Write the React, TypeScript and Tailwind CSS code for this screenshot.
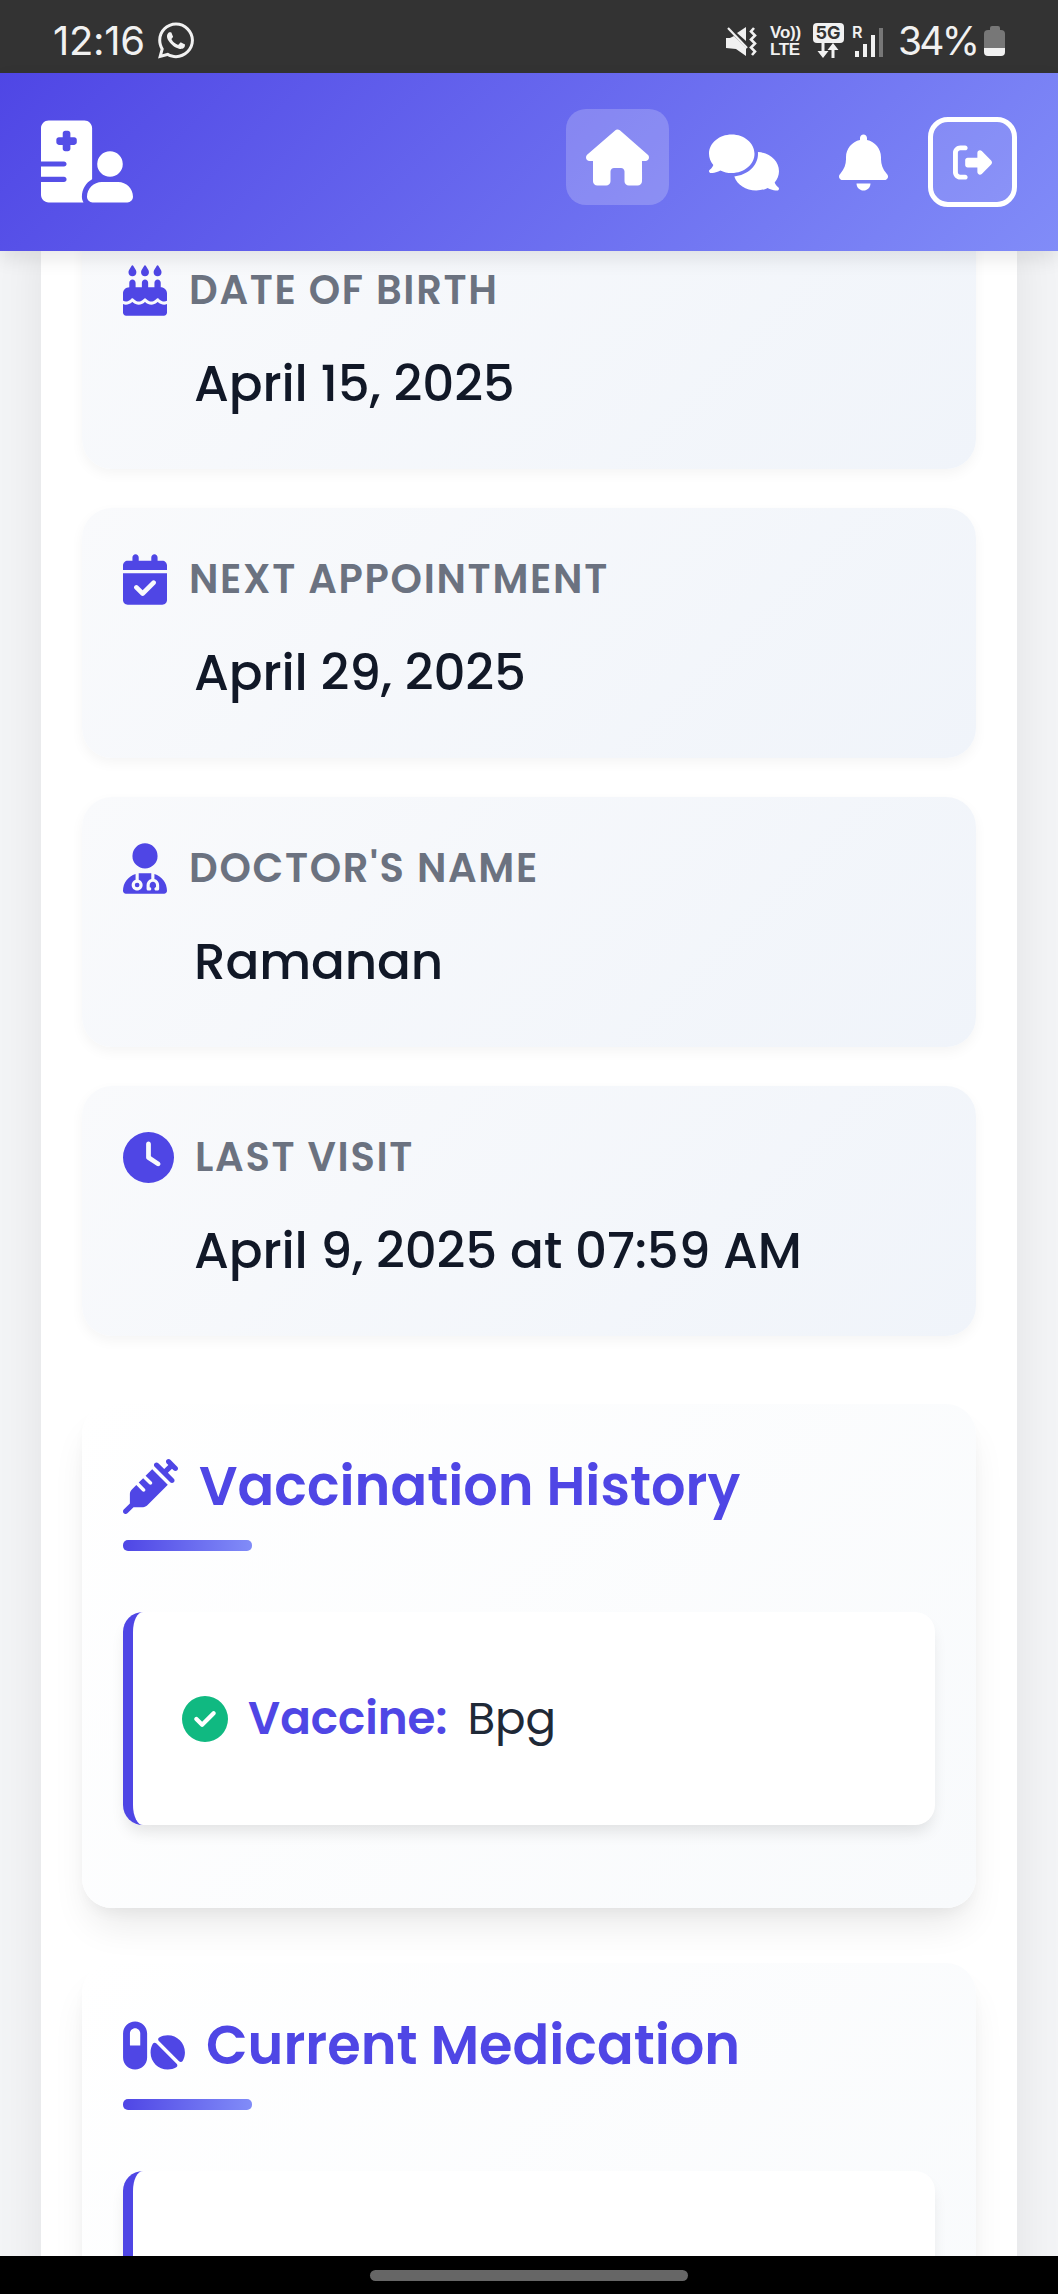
import React from "react";
import type { IconType } from "react-icons";
import {
  FaBell,
  FaCakeCandles,
  FaCalendarCheck,
  FaCircleCheck,
  FaClock,
  FaComments,
  FaHospitalUser,
  FaHouse,
  FaPills,
  FaRightFromBracket,
  FaSyringe,
  FaUserDoctor,
  FaWhatsapp,
} from "react-icons/fa6";

function MutedVibrateIcon() {
  return (
    <svg viewBox="0 0 32 32" className="h-8 w-8 shrink-0" fill="none">
      <path d="M1 13h4l4-2 12 12v8l-10-7-10-1z" fill="#f1f1f1" />
      <path d="M12 8l9-6v14z" fill="#f1f1f1" />
      <path d="M3 3l19 20" stroke="#f1f1f1" strokeWidth="2.2" />
      <path
        d="M29 3l-3 3.5 4 4-4 4 4 4-4 4 4 4-3 3.5"
        stroke="#f1f1f1"
        strokeWidth="2.6"
      />
    </svg>
  );
}

function DataArrowsIcon() {
  return (
    <svg viewBox="0 0 24 15" className="h-[15px] w-6 shrink-0" fill="none">
      <path d="M7 0v9M17 15V6" stroke="#f1f1f1" strokeWidth="3" />
      <path d="M1.5 8h11L7 15zM11.500 7h11L17 0z" fill="#f1f1f1" />
    </svg>
  );
}

function StatusBar() {
  return (
    <div className="flex h-[73px] shrink-0 items-center bg-[#333333] pt-2 pr-[53px] pl-[53px] font-[Inter,sans-serif] text-[#f1f1f1]">
      <span className="w-[104px] text-[40px] leading-none tracking-[-0.3px]">12:16</span>
      <FaWhatsapp className="h-[41px] w-[38px]" />
      <div className="ml-auto flex items-center">
        <MutedVibrateIcon />
        <div className="ml-[13px] flex w-[34px] flex-col font-['Liberation_Sans',sans-serif] text-[17px] leading-[17px] font-bold">
          <span className="tracking-[-0.2px]">Vo))</span>
          <span className="tracking-[-0.4px]">LTE</span>
        </div>
        <div className="ml-2 flex w-8 flex-col items-center">
          <span className="flex h-5 w-[31px] items-center justify-center rounded-[4px] bg-[#f1f1f1] text-[18px] leading-none font-bold text-[#333333]">
            5G
          </span>
          <DataArrowsIcon />
        </div>
        <div className="relative ml-2 flex h-8 w-8 items-end gap-[4px] pl-[3px]">
          <span className="absolute top-0 left-0 text-[16px] leading-[15px] font-semibold">R</span>
          <span className="h-[6px] w-[4px] bg-[#f1f1f1]" />
          <span className="h-[13px] w-[4px] bg-[#f1f1f1]" />
          <span className="h-[22px] w-[4px] bg-[#f1f1f1]" />
          <span className="h-[29px] w-[4px] bg-[#777777]" />
        </div>
        <span className="ml-[14px] w-[84px] text-[39px] leading-none tracking-[-2.8px]">34%</span>
        <div className="ml-[2px] flex flex-col items-center">
          <span className="h-[4px] w-[10px] rounded-t-[2px] bg-[#777777]" />
          <span className="h-[18px] w-[21px] rounded-t-[4px] bg-[#777777]" />
          <span className="h-[8px] w-[21px] rounded-b-[4px] bg-[#f1f1f1]" />
        </div>
      </div>
    </div>
  );
}

function Header() {
  return (
    <header className="relative z-10 flex h-[178px] shrink-0 items-start bg-[linear-gradient(135deg,#4f46e5,#818cf8)] pr-[41px] pl-[41px] text-white shadow-[0_8px_18px_rgba(0,0,0,0.09)]">
      <FaHospitalUser className="mt-[47px] h-[83px] w-[92px]" />
      <nav className="ml-auto flex items-start">
        <a className="mt-9 flex h-[96px] w-[103px] items-center justify-center rounded-[20px] bg-white/20">
          <FaHouse className="h-[57px] w-[63px]" />
        </a>
        <a className="mt-[61px] ml-10">
          <FaComments className="h-[57px] w-[70px]" />
        </a>
        <a className="mt-[61px] ml-[60px]">
          <FaBell className="h-[57px] w-[49px]" />
        </a>
        <button className="mt-[44px] ml-10 flex h-[90px] w-[89px] items-center justify-center rounded-[20px] border-[5px] border-white bg-white/10">
          <FaRightFromBracket className="h-[39px] w-[39px]" />
        </button>
      </nav>
    </header>
  );
}

type InfoProps = {
  icon: IconType;
  iconClass: string;
  label: string;
  value: string;
};

const infoCards: InfoProps[] = [
  { icon: FaCakeCandles, iconClass: "w-[44px] mr-px", label: "DATE OF BIRTH", value: "April 15, 2025" },
  { icon: FaCalendarCheck, iconClass: "w-[44px] mr-px", label: "NEXT APPOINTMENT", value: "April 29, 2025" },
  { icon: FaUserDoctor, iconClass: "w-[44px] mr-px", label: "DOCTOR'S NAME", value: "Ramanan" },
  { icon: FaClock, iconClass: "w-[51px]", label: "LAST VISIT", value: "April 9, 2025 at 07:59 AM" },
];

function InfoCard({ icon: Icon, iconClass, label, value }: InfoProps) {
  return (
    <div className="h-[250px] rounded-[30px] bg-[linear-gradient(135deg,#f9fafc,#f0f4fa)] px-[41px] pt-[42px] whitespace-nowrap shadow-[0_5px_13px_rgba(0,0,0,0.045)]">
      <div className="flex h-[58px] items-center gap-[21px]">
        <Icon className={`h-[51px] shrink-0 text-[#4f46e5] ${iconClass}`} />
        <span className="text-[40px] font-semibold tracking-[1.7px] text-[#6b7280]">{label}</span>
      </div>
      <p className="mt-[33px] pl-[71px] text-[50px] leading-[64px] font-medium tracking-[-0.15px] text-[#111827]">
        {value}
      </p>
    </div>
  );
}

type SectionProps = {
  icon: IconType;
  iconClass: string;
  title: string;
  children?: React.ReactNode;
};

function Section({ icon: Icon, iconClass, title, children }: SectionProps) {
  return (
    <section className="h-[504px] shrink-0 rounded-[30px] bg-[linear-gradient(135deg,#ffffff,#f8fafc)] px-[41px] pt-[52px] whitespace-nowrap shadow-[0_24px_38px_-8px_rgba(0,0,0,0.09),0_8px_15px_-5px_rgba(0,0,0,0.05)]">
      <h2 className="flex h-[60px] items-center gap-[21px] text-[#4f46e5]">
        <Icon className={`shrink-0 ${iconClass}`} />
        <span className="text-[54.2px] leading-[60px] font-semibold">{title}</span>
      </h2>
      <div className="mt-6 h-[11px] w-[129px] rounded-[5px] bg-[linear-gradient(90deg,#4f46e5,#818cf8)]" />
      <div className="mt-[61px] flex h-[213px] items-center rounded-[20px] border-l-[10px] border-[#4f46e5] bg-white pl-[49px] shadow-[0_10px_15px_-3px_rgba(0,0,0,0.1)]">
        {children}
      </div>
    </section>
  );
}

export default function App() {
  return (
    <div className="flex h-[2294px] w-[1058px] flex-col overflow-hidden bg-[#f3f4f6] font-[Poppins,Inter,sans-serif]">
      <StatusBar />
      <Header />
      <main className="min-h-0 flex-1 overflow-hidden px-[41px]">
        <div className="-mt-[32px] h-[2060px] bg-white px-[41px] shadow-[0_20px_45px_rgba(0,0,0,0.08)]">
          <div className="flex flex-col gap-[39px]">
            {infoCards.map((card) => (
              <InfoCard key={card.label} {...card} />
            ))}
          </div>
          <div className="mt-[68px] flex flex-col gap-[55px]">
            <Section icon={FaSyringe} iconClass="h-[55px] w-[55px]" title="Vaccination History">
              <FaCircleCheck className="h-[46px] w-[46px] text-[#10b981]" />
              <span className="ml-[20px] text-[45.2px] font-semibold text-[#4f46e5]">Vaccine:</span>
              <span className="ml-[20px] text-[45.2px] text-[#1f2937]">Bpg</span>
            </Section>
            <Section icon={FaPills} iconClass="h-[55px] w-[62px]" title="Current Medication" />
          </div>
        </div>
      </main>
      <footer className="relative z-10 flex h-[38px] shrink-0 items-center justify-center bg-black">
        <div className="h-[11px] w-[318px] rounded-full bg-[#666666]" />
      </footer>
    </div>
  );
}
